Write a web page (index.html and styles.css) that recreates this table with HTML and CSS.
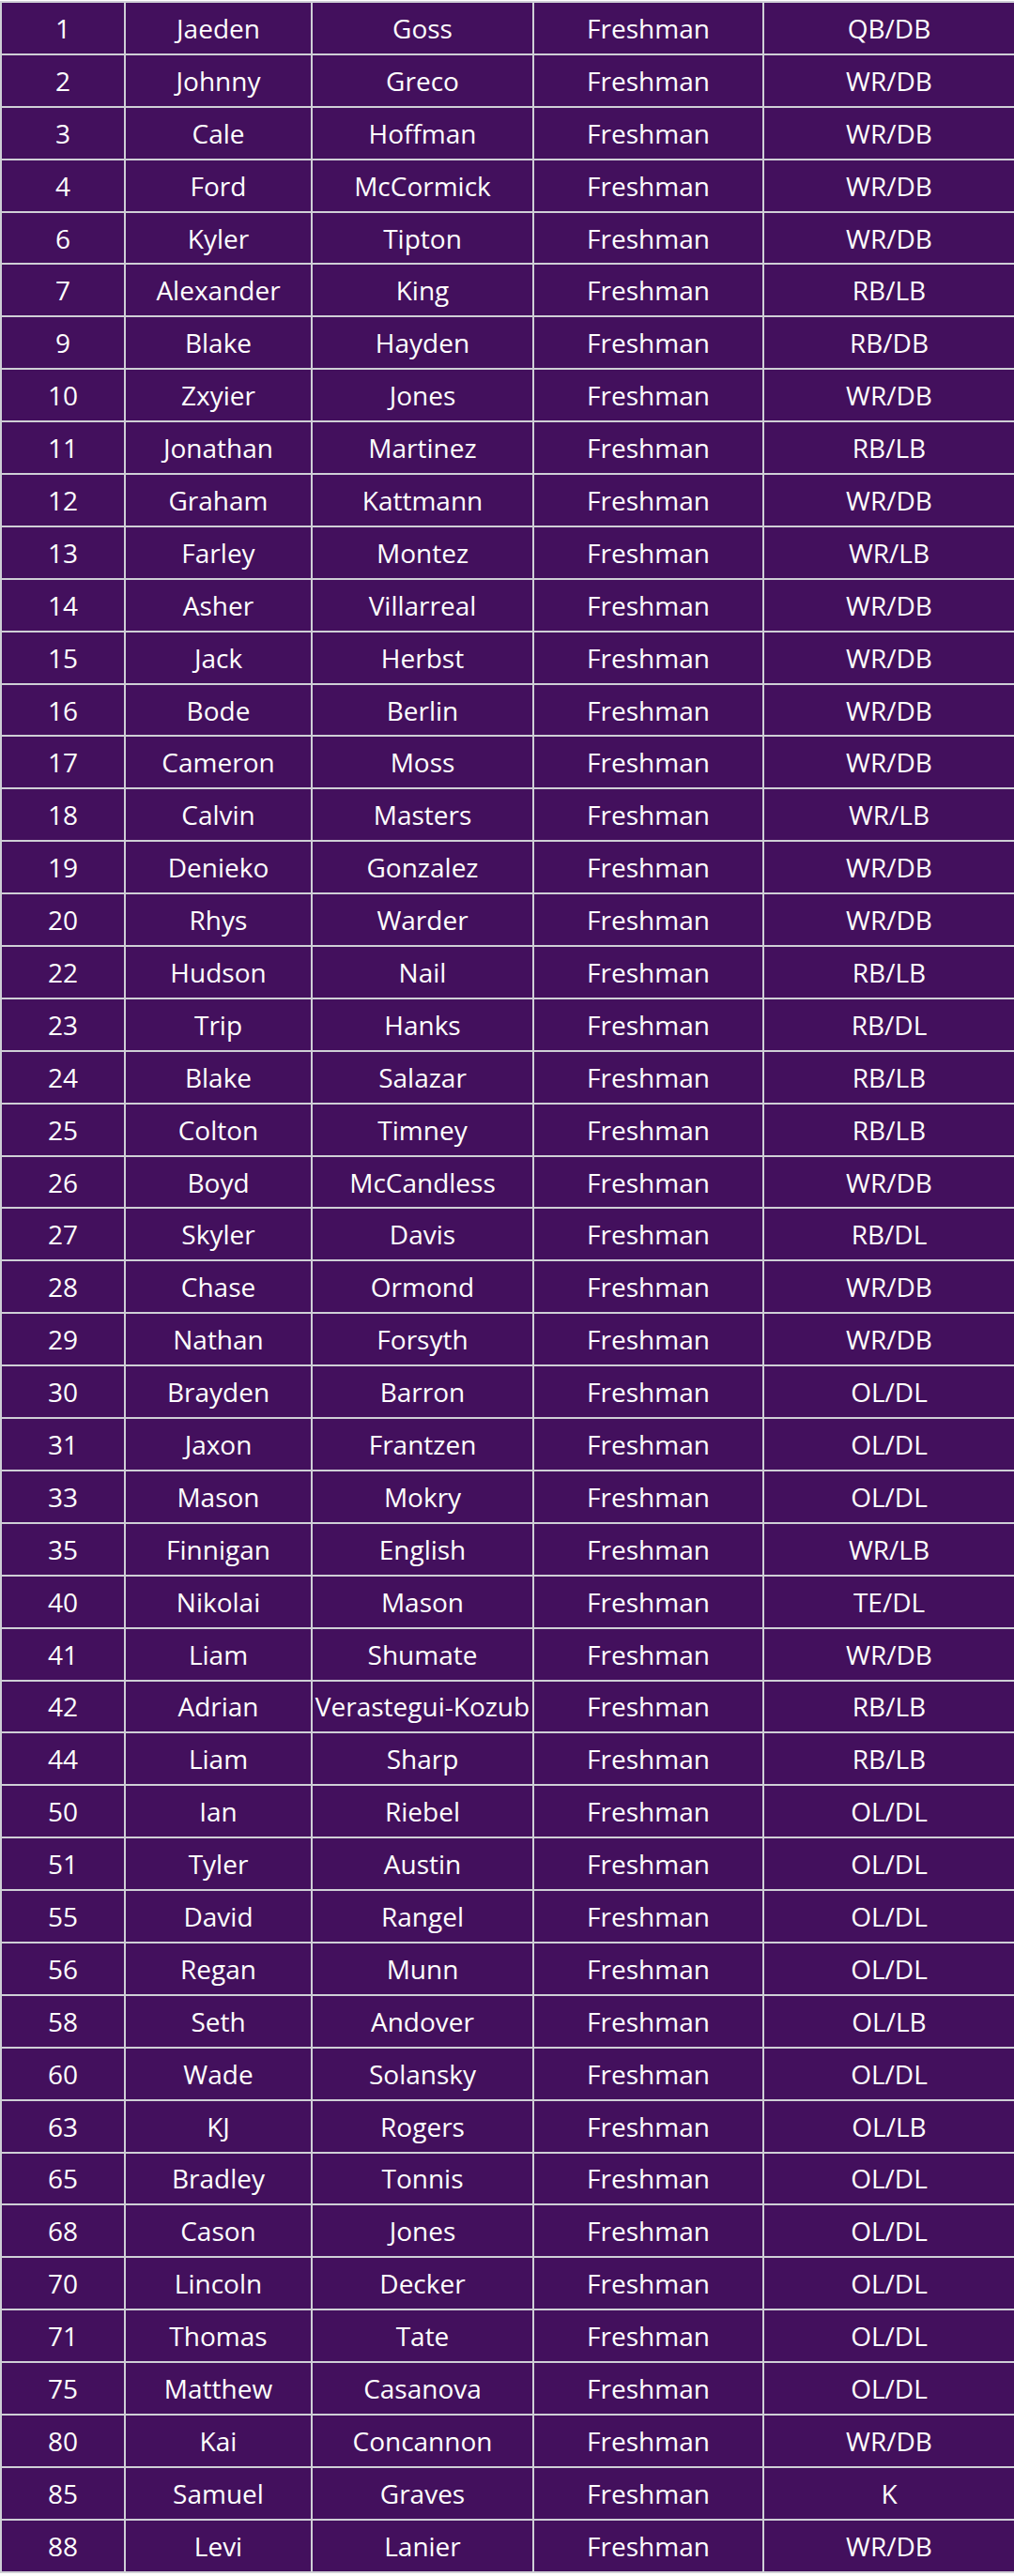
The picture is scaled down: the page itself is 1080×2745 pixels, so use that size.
FILE: index.html
```html
<!DOCTYPE html>
<html lang="en">
<head>
<meta charset="utf-8">
<title>Roster</title>
<link rel="stylesheet" href="styles.css">
</head>
<body>
<table class="roster">
<colgroup><col class="c-num"><col class="c-first"><col class="c-last"><col class="c-year"><col class="c-pos"></colgroup>
<tbody>
<tr><td>1</td><td>Jaeden</td><td>Goss</td><td>Freshman</td><td>QB/DB</td></tr>
<tr><td>2</td><td>Johnny</td><td>Greco</td><td>Freshman</td><td>WR/DB</td></tr>
<tr><td>3</td><td>Cale</td><td>Hoffman</td><td>Freshman</td><td>WR/DB</td></tr>
<tr><td>4</td><td>Ford</td><td>McCormick</td><td>Freshman</td><td>WR/DB</td></tr>
<tr><td>6</td><td>Kyler</td><td>Tipton</td><td>Freshman</td><td>WR/DB</td></tr>
<tr><td>7</td><td>Alexander</td><td>King</td><td>Freshman</td><td>RB/LB</td></tr>
<tr><td>9</td><td>Blake</td><td>Hayden</td><td>Freshman</td><td>RB/DB</td></tr>
<tr><td>10</td><td>Zxyier</td><td>Jones</td><td>Freshman</td><td>WR/DB</td></tr>
<tr><td>11</td><td>Jonathan</td><td>Martinez</td><td>Freshman</td><td>RB/LB</td></tr>
<tr><td>12</td><td>Graham</td><td>Kattmann</td><td>Freshman</td><td>WR/DB</td></tr>
<tr><td>13</td><td>Farley</td><td>Montez</td><td>Freshman</td><td>WR/LB</td></tr>
<tr><td>14</td><td>Asher</td><td>Villarreal</td><td>Freshman</td><td>WR/DB</td></tr>
<tr><td>15</td><td>Jack</td><td>Herbst</td><td>Freshman</td><td>WR/DB</td></tr>
<tr><td>16</td><td>Bode</td><td>Berlin</td><td>Freshman</td><td>WR/DB</td></tr>
<tr><td>17</td><td>Cameron</td><td>Moss</td><td>Freshman</td><td>WR/DB</td></tr>
<tr><td>18</td><td>Calvin</td><td>Masters</td><td>Freshman</td><td>WR/LB</td></tr>
<tr><td>19</td><td>Denieko</td><td>Gonzalez</td><td>Freshman</td><td>WR/DB</td></tr>
<tr><td>20</td><td>Rhys</td><td>Warder</td><td>Freshman</td><td>WR/DB</td></tr>
<tr><td>22</td><td>Hudson</td><td>Nail</td><td>Freshman</td><td>RB/LB</td></tr>
<tr><td>23</td><td>Trip</td><td>Hanks</td><td>Freshman</td><td>RB/DL</td></tr>
<tr><td>24</td><td>Blake</td><td>Salazar</td><td>Freshman</td><td>RB/LB</td></tr>
<tr><td>25</td><td>Colton</td><td>Timney</td><td>Freshman</td><td>RB/LB</td></tr>
<tr><td>26</td><td>Boyd</td><td>McCandless</td><td>Freshman</td><td>WR/DB</td></tr>
<tr><td>27</td><td>Skyler</td><td>Davis</td><td>Freshman</td><td>RB/DL</td></tr>
<tr><td>28</td><td>Chase</td><td>Ormond</td><td>Freshman</td><td>WR/DB</td></tr>
<tr><td>29</td><td>Nathan</td><td>Forsyth</td><td>Freshman</td><td>WR/DB</td></tr>
<tr><td>30</td><td>Brayden</td><td>Barron</td><td>Freshman</td><td>OL/DL</td></tr>
<tr><td>31</td><td>Jaxon</td><td>Frantzen</td><td>Freshman</td><td>OL/DL</td></tr>
<tr><td>33</td><td>Mason</td><td>Mokry</td><td>Freshman</td><td>OL/DL</td></tr>
<tr><td>35</td><td>Finnigan</td><td>English</td><td>Freshman</td><td>WR/LB</td></tr>
<tr><td>40</td><td>Nikolai</td><td>Mason</td><td>Freshman</td><td>TE/DL</td></tr>
<tr><td>41</td><td>Liam</td><td>Shumate</td><td>Freshman</td><td>WR/DB</td></tr>
<tr><td>42</td><td>Adrian</td><td>Verastegui-Kozub</td><td>Freshman</td><td>RB/LB</td></tr>
<tr><td>44</td><td>Liam</td><td>Sharp</td><td>Freshman</td><td>RB/LB</td></tr>
<tr><td>50</td><td>Ian</td><td>Riebel</td><td>Freshman</td><td>OL/DL</td></tr>
<tr><td>51</td><td>Tyler</td><td>Austin</td><td>Freshman</td><td>OL/DL</td></tr>
<tr><td>55</td><td>David</td><td>Rangel</td><td>Freshman</td><td>OL/DL</td></tr>
<tr><td>56</td><td>Regan</td><td>Munn</td><td>Freshman</td><td>OL/DL</td></tr>
<tr><td>58</td><td>Seth</td><td>Andover</td><td>Freshman</td><td>OL/LB</td></tr>
<tr><td>60</td><td>Wade</td><td>Solansky</td><td>Freshman</td><td>OL/DL</td></tr>
<tr><td>63</td><td>KJ</td><td>Rogers</td><td>Freshman</td><td>OL/LB</td></tr>
<tr><td>65</td><td>Bradley</td><td>Tonnis</td><td>Freshman</td><td>OL/DL</td></tr>
<tr><td>68</td><td>Cason</td><td>Jones</td><td>Freshman</td><td>OL/DL</td></tr>
<tr><td>70</td><td>Lincoln</td><td>Decker</td><td>Freshman</td><td>OL/DL</td></tr>
<tr><td>71</td><td>Thomas</td><td>Tate</td><td>Freshman</td><td>OL/DL</td></tr>
<tr><td>75</td><td>Matthew</td><td>Casanova</td><td>Freshman</td><td>OL/DL</td></tr>
<tr><td>80</td><td>Kai</td><td>Concannon</td><td>Freshman</td><td>WR/DB</td></tr>
<tr><td>85</td><td>Samuel</td><td>Graves</td><td>Freshman</td><td>K</td></tr>
<tr><td>88</td><td>Levi</td><td>Lanier</td><td>Freshman</td><td>WR/DB</td></tr>
</tbody>
</table>
</body>
</html>
```

FILE: styles.css
```css
html, body {
  margin: 0;
  padding: 0;
  background: #ffffff;
}
body {
  padding-top: 1px;
}
.roster {
  width: 1080px;
  border-collapse: collapse;
  table-layout: fixed;
  background: #43105d;
  font-family: "Open Sans", "Noto Sans", sans-serif;
  font-size: 28px;
  color: #ffffff;
}
.c-num { width: 132px; }
.c-first { width: 199px; }
.c-last { width: 236px; }
.c-year { width: 245px; }
.c-pos { width: 268px; }
.roster td {
  border: 2px solid #cfcfd6;
  height: 53.9px;
  padding: 0;
  text-align: center;
  vertical-align: middle;
  white-space: nowrap;
  overflow: hidden;
  line-height: 1;
}
```
